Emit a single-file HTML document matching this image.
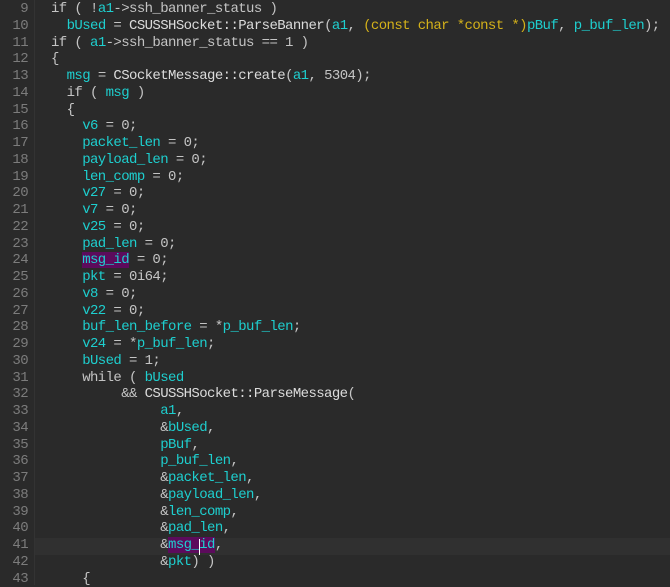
<!DOCTYPE html><html><head><style>
html,body{margin:0;padding:0;background:#2a2a2a;width:670px;height:585px;overflow:hidden}
.g{position:absolute;left:0;top:0;width:34px;height:585px;border-right:1px solid #333;}
.cur{position:absolute;left:35px;top:538px;width:635px;height:17px;background:#303030}
pre{position:absolute;margin:0;top:1px;font-family:"Liberation Mono",monospace;font-size:14px;letter-spacing:-0.6px;line-height:16.75px;color:#c4c4c4}
.n{left:0;width:28px;text-align:right;color:#7c7c7c}
.c{left:35.4px}
.v{color:#1ecfcf}.k{color:#d4b11a}.f{color:#dcdcdc}.h{background:#5c0b5c}
.caret{position:absolute;left:199px;top:539px;width:1px;height:16px;background:#fff}
</style></head><body>
<div class="g"></div><div class="cur"></div>
<pre class="n">9
10
11
12
13
14
15
16
17
18
19
20
21
22
23
24
25
26
27
28
29
30
31
32
33
34
35
36
37
38
39
40
41
42
43</pre>
<pre class="c">  if ( !<span class="v">a1</span>->ssh_banner_status )
    <span class="v">bUsed</span> = <span class="f">CSUSSHSocket::ParseBanner</span>(<span class="v">a1</span>, <span class="k">(const char *const *)</span><span class="v">pBuf</span>, <span class="v">p_buf_len</span>);
  if ( <span class="v">a1</span>->ssh_banner_status == 1 )
  {
    <span class="v">msg</span> = <span class="f">CSocketMessage::create</span>(<span class="v">a1</span>, 5304);
    if ( <span class="v">msg</span> )
    {
      <span class="v">v6</span> = 0;
      <span class="v">packet_len</span> = 0;
      <span class="v">payload_len</span> = 0;
      <span class="v">len_comp</span> = 0;
      <span class="v">v27</span> = 0;
      <span class="v">v7</span> = 0;
      <span class="v">v25</span> = 0;
      <span class="v">pad_len</span> = 0;
      <span class="v h">msg_id</span> = 0;
      <span class="v">pkt</span> = 0i64;
      <span class="v">v8</span> = 0;
      <span class="v">v22</span> = 0;
      <span class="v">buf_len_before</span> = *<span class="v">p_buf_len</span>;
      <span class="v">v24</span> = *<span class="v">p_buf_len</span>;
      <span class="v">bUsed</span> = 1;
      while ( <span class="v">bUsed</span>
           &amp;&amp; <span class="f">CSUSSHSocket::ParseMessage</span>(
                <span class="v">a1</span>,
                &amp;<span class="v">bUsed</span>,
                <span class="v">pBuf</span>,
                <span class="v">p_buf_len</span>,
                &amp;<span class="v">packet_len</span>,
                &amp;<span class="v">payload_len</span>,
                &amp;<span class="v">len_comp</span>,
                &amp;<span class="v">pad_len</span>,
                &amp;<span class="v h">msg_id</span>,
                &amp;<span class="v">pkt</span>) )
      {</pre>
<div class="caret"></div>
</body></html>
